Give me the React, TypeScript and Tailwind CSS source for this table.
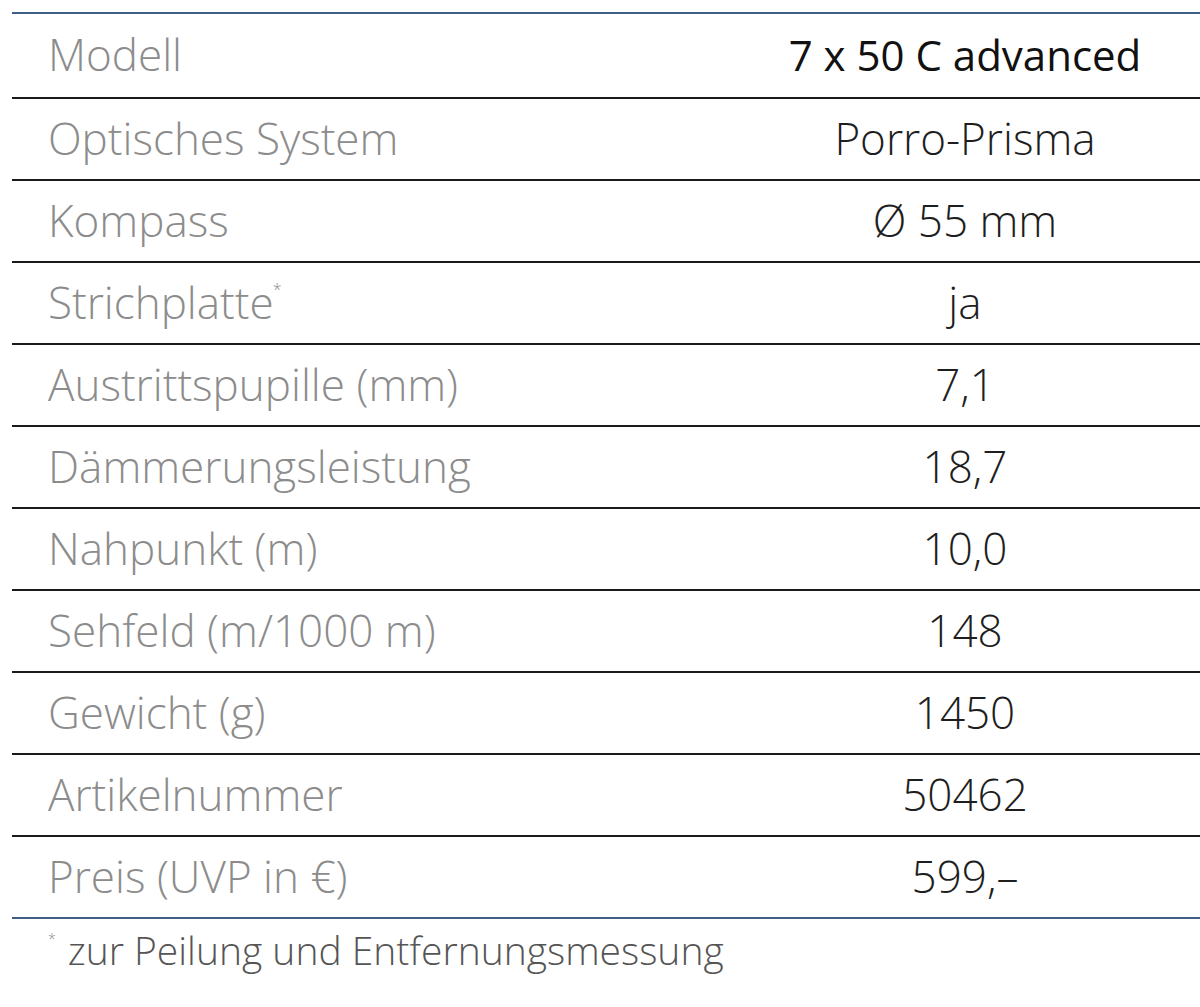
// SpecTable — technical data sheet for the binocular model.
// Two columns: gray light labels on the left, centered values on the right.

const rows: Array<{ label: string; value: string; star?: boolean }> = [
  { label: "Optisches System", value: "Porro-Prisma" },
  { label: "Kompass", value: "Ø 55 mm" },
  { label: "Strichplatte", value: "ja", star: true },
  { label: "Austrittspupille (mm)", value: "7,1" },
  { label: "Dämmerungsleistung", value: "18,7" },
  { label: "Nahpunkt (m)", value: "10,0" },
  { label: "Sehfeld (m/1000 m)", value: "148" },
  { label: "Gewicht (g)", value: "1450" },
  { label: "Artikelnummer", value: "50462" },
  { label: "Preis (UVP in €)", value: "599,–" },
];

export default function App() {
  return (
    <div
      className="w-[1200px] h-[1007px] bg-white pt-3 pl-3 overflow-hidden"
      style={{ fontFamily: '"Open Sans", "Noto Sans", sans-serif' }}
    >
      <div className="border-t-2 border-b-2 border-[#3f5f86]">
        {/* Header row */}
        <div className="flex h-[83px] items-center pb-[3px]">
          <div className="w-[718px] pl-9 text-[44px] font-light text-[#8c8c8c]">Modell</div>
          <div className="flex-1 text-center text-[42px] font-normal text-[#111]">7 x 50 C advanced</div>
        </div>

        {rows.map((r) => (
          <div key={r.label} className="flex h-[82px] items-center pb-[3px] border-t-2 border-[#1a1a1a]">
            <div className="w-[718px] pl-9 text-[44px] font-light text-[#8c8c8c]">
              {r.label}
              {r.star && <sup className="text-[16px] align-super -ml-px">*</sup>}
            </div>
            <div className="flex-1 text-center text-[44px] font-light text-[#1e1e1e]">{r.value}</div>
          </div>
        ))}
      </div>

      {/* Footnote */}
      <div className="pl-9 pt-0.5 text-[39px] font-light text-[#555]">
        <sup className="text-[14px] align-super mr-3 text-[#888]">*</sup>zur Peilung und Entfernungsmessung
      </div>
    </div>
  );
}
